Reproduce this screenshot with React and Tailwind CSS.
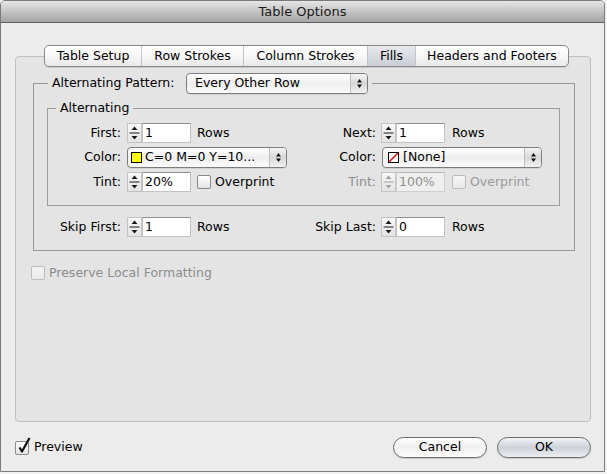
import React from "react";

const ink = "#111111";

function PopArrows({ color = ink }) {
  return (
    <svg width="7" height="13" viewBox="0 0 7 13">
      <path d="M3.5 2 L6 5.5 H1 Z" fill={color} />
      <path d="M1 7.5 H6 L3.5 11 Z" fill={color} />
    </svg>
  );
}

function Stepper({ disabled }) {
  const c = disabled ? "#a0a0a0" : "#1a1a1a";
  return (
    <div className="w-[15px] h-[20px] shrink-0 border border-[#c3c3c3] bg-gradient-to-b from-[#f8f8f8] to-[#e3e3e3] flex items-center justify-center">
      <svg width="11" height="16" viewBox="0 0 11 16">
        <path d="M5.5 1.5 L8.5 5 H2.5 Z" fill={c} />
        <rect x="0.5" y="7.5" width="10" height="1" fill={c} />
        <path d="M2.5 11 H8.5 L5.5 14.5 Z" fill={c} />
      </svg>
    </div>
  );
}

function Field({ value, disabled }) {
  return (
    <div
      className={
        disabled
          ? "w-[49px] h-[20px] shrink-0 border border-[#cfcfcf] border-t-[#b5b5b5] bg-[#efefef] pl-[2px] flex items-center text-[#8f8f8f]"
          : "w-[49px] h-[20px] shrink-0 border border-[#c2c2c2] border-t-[#8d8d8d] bg-white pl-[2px] flex items-center"
      }
    >
      {value}
    </div>
  );
}

function Spin({ value, disabled }) {
  return (
    <div className="flex">
      <Stepper disabled={disabled} />
      <Field value={value} disabled={disabled} />
    </div>
  );
}

function Popup({ children, width }) {
  return (
    <div
      className={
        width +
        " h-[21px] shrink-0 rounded-[4px] border border-[#7c7c7c] bg-gradient-to-b from-white via-[#eeeeee] to-[#fbfbfb] flex items-center overflow-hidden shadow-[0_1px_0_rgba(0,0,0,0.08)]"
      }
    >
      <div className="flex-1 flex items-center min-w-0">{children}</div>
      <div className="w-[17px] h-full border-l border-[#bdbdbd] bg-gradient-to-b from-[#f4f4f4] via-[#d8d8d8] to-[#f2f2f2] flex items-center justify-center">
        <PopArrows />
      </div>
    </div>
  );
}

function Check({ disabled, checked }) {
  return (
    <div
      className={
        disabled
          ? "relative w-[14px] h-[14px] shrink-0 rounded-[2px] border border-[#bcbcbc] bg-gradient-to-b from-[#f5f5f5] to-[#e9e9e9]"
          : "relative w-[14px] h-[14px] shrink-0 rounded-[2px] border border-[#8a8a8a] bg-gradient-to-b from-white to-[#e4e4e4]"
      }
    >
      {checked && (
        <svg
          className="absolute left-[1px] top-[-5px] overflow-visible"
          width="14"
          height="18"
          viewBox="0 0 14 18"
        >
          <path
            d="M2.5 10.5 L5 14.5 L12.5 1"
            fill="none"
            stroke="#111"
            strokeWidth="2.2"
            strokeLinejoin="round"
          />
        </svg>
      )}
    </div>
  );
}

const tabs = [
  { name: "Table Setup", w: "w-[96px]" },
  { name: "Row Strokes", w: "w-[102px]" },
  { name: "Column Strokes", w: "w-[124px]" },
  { name: "Fills", w: "w-[48px]", on: true },
  { name: "Headers and Footers", w: "w-[153px]" },
];

export default function App() {
  return (
    <div className="w-[607px] h-[474px] bg-[#f2f2f2] overflow-hidden font-['DejaVu_Sans','Liberation_Sans',sans-serif] text-[12.5px] text-black leading-none">
      <div className="w-[605px] h-[472px] border border-[#7a7a7a] rounded-t-[5px] bg-[#ececec] flex flex-col overflow-hidden">
        {/* title bar */}
        <div className="h-[22px] shrink-0 bg-gradient-to-b from-[#e6e6e6] to-[#a4a4a4] border-b border-[#5e5e5e] flex items-center justify-center text-[13px] text-[#1a1a1a]">
          Table Options
        </div>

        <div className="flex-1 flex flex-col pt-[22px]">
          {/* tab strip */}
          <div className="relative z-10 ml-[43px] flex w-fit h-[22px] rounded-[5px] border border-[#878787] overflow-hidden bg-gradient-to-b from-white via-[#f7f7f7] to-[#e9e9e9] shadow-[0_1px_0_rgba(0,0,0,0.1)]">
            {tabs.map((t, i) => (
              <div
                key={t.name}
                className={
                  t.w +
                  " h-full flex items-center justify-center " +
                  (i > 0 ? "border-l border-[#c4c4c4] " : "") +
                  (t.on
                    ? "bg-gradient-to-b from-[#e6e9ee] to-[#c9ced6]"
                    : "")
                }
              >
                {t.name}
              </div>
            ))}
          </div>

          {/* tab panel */}
          <div className="ml-[14px] -mt-[11px] w-[576px] h-[366px] shrink-0 rounded-[4px] border border-[#bfbfbf] bg-[#e4e4e4] flex flex-col">
            <fieldset className="ml-[17px] mt-[16px] w-[542px] border border-[#969696] pb-[13px]">
              <legend className="ml-[14px] px-[4px] flex items-center h-[21px]">
                <span className="w-[134px]">Alternating Pattern:</span>
                <Popup width="w-[182px]">
                  <span className="pl-[8px]">Every Other Row</span>
                </Popup>
              </legend>

              <fieldset className="ml-[13px] mr-[14px] mt-[6px] border border-[#9c9c9c] pt-[7px] pb-[13px]">
                <legend className="ml-[8px] px-[4px] leading-[16px]">
                  Alternating
                </legend>
                <div className="flex flex-col gap-[4px]">
                  {/* first / next */}
                  <div className="flex h-[20px] items-center">
                    <div className="w-[252px] flex items-center">
                      <span className="w-[73px] text-right">First:</span>
                      <div className="ml-[6px]">
                        <Spin value="1" />
                      </div>
                      <span className="ml-[6px]">Rows</span>
                    </div>
                    <div className="flex items-center">
                      <span className="w-[76px] text-right">Next:</span>
                      <div className="ml-[5px]">
                        <Spin value="1" />
                      </div>
                      <span className="ml-[7px]">Rows</span>
                    </div>
                  </div>

                  {/* colors */}
                  <div className="flex h-[21px] items-center">
                    <div className="w-[252px] flex items-center">
                      <span className="w-[73px] text-right">Color:</span>
                      <div className="ml-[6px]">
                        <Popup width="w-[160px]">
                          <span className="ml-[3px] w-[11px] h-[11px] border border-black bg-[#ffff00] shrink-0" />
                          <span className="ml-[3px] whitespace-nowrap">
                            C=0 M=0 Y=10...
                          </span>
                        </Popup>
                      </div>
                    </div>
                    <div className="flex items-center">
                      <span className="w-[76px] text-right">Color:</span>
                      <div className="ml-[6px]">
                        <Popup width="w-[160px]">
                          <svg
                            className="ml-[5px] shrink-0"
                            width="11"
                            height="11"
                            viewBox="0 0 11 11"
                          >
                            <rect
                              x="0.5"
                              y="0.5"
                              width="10"
                              height="10"
                              fill="#fff"
                              stroke="#000"
                            />
                            <path
                              d="M1 10 L10 1"
                              stroke="#e01010"
                              strokeWidth="1.6"
                            />
                          </svg>
                          <span className="ml-[4px]">[None]</span>
                        </Popup>
                      </div>
                    </div>
                  </div>

                  {/* tints */}
                  <div className="flex h-[20px] items-center">
                    <div className="w-[252px] flex items-center">
                      <span className="w-[73px] text-right">Tint:</span>
                      <div className="ml-[6px]">
                        <Spin value="20%" />
                      </div>
                      <div className="ml-[6px]">
                        <Check />
                      </div>
                      <span className="ml-[4px]">Overprint</span>
                    </div>
                    <div className="flex items-center">
                      <span className="w-[76px] text-right text-[#8f8f8f]">
                        Tint:
                      </span>
                      <div className="ml-[5px]">
                        <Spin value="100%" disabled />
                      </div>
                      <div className="ml-[7px]">
                        <Check disabled />
                      </div>
                      <span className="ml-[4px] text-[#9a9a9a]">Overprint</span>
                    </div>
                  </div>
                </div>
              </fieldset>

              {/* skip rows */}
              <div className="mt-[11px] flex h-[20px] items-center">
                <div className="w-[266px] flex items-center">
                  <span className="w-[87px] text-right">Skip First:</span>
                  <div className="ml-[6px]">
                    <Spin value="1" />
                  </div>
                  <span className="ml-[6px]">Rows</span>
                </div>
                <div className="flex items-center">
                  <span className="w-[76px] text-right">Skip Last:</span>
                  <div className="ml-[5px]">
                    <Spin value="0" />
                  </div>
                  <span className="ml-[7px]">Rows</span>
                </div>
              </div>
            </fieldset>

            <div className="ml-[15px] mt-[15px] flex items-center">
              <Check disabled />
              <span className="ml-[4px] text-[#8c8c8c]">
                Preserve Local Formatting
              </span>
            </div>
          </div>

          {/* footer */}
          <div className="mt-[15px] h-[21px] flex items-center pl-[14px] pr-[13px]">
            <Check checked />
            <span className="ml-[5px]">Preview</span>
            <div className="ml-auto flex gap-[10px]">
              <div className="w-[94px] h-[21px] rounded-full border border-[#6c6c6c] bg-gradient-to-b from-white via-[#f0f0f0] to-[#fdfdfd] flex items-center justify-center shadow-[0_1px_1px_rgba(0,0,0,0.15)]">
                Cancel
              </div>
              <div className="w-[94px] h-[21px] rounded-full border border-[#6c6c6c] bg-gradient-to-b from-[#f1f3f6] via-[#cdd2d9] to-[#eceef2] flex items-center justify-center shadow-[0_1px_1px_rgba(0,0,0,0.15)]">
                OK
              </div>
            </div>
          </div>
        </div>
      </div>
    </div>
  );
}
